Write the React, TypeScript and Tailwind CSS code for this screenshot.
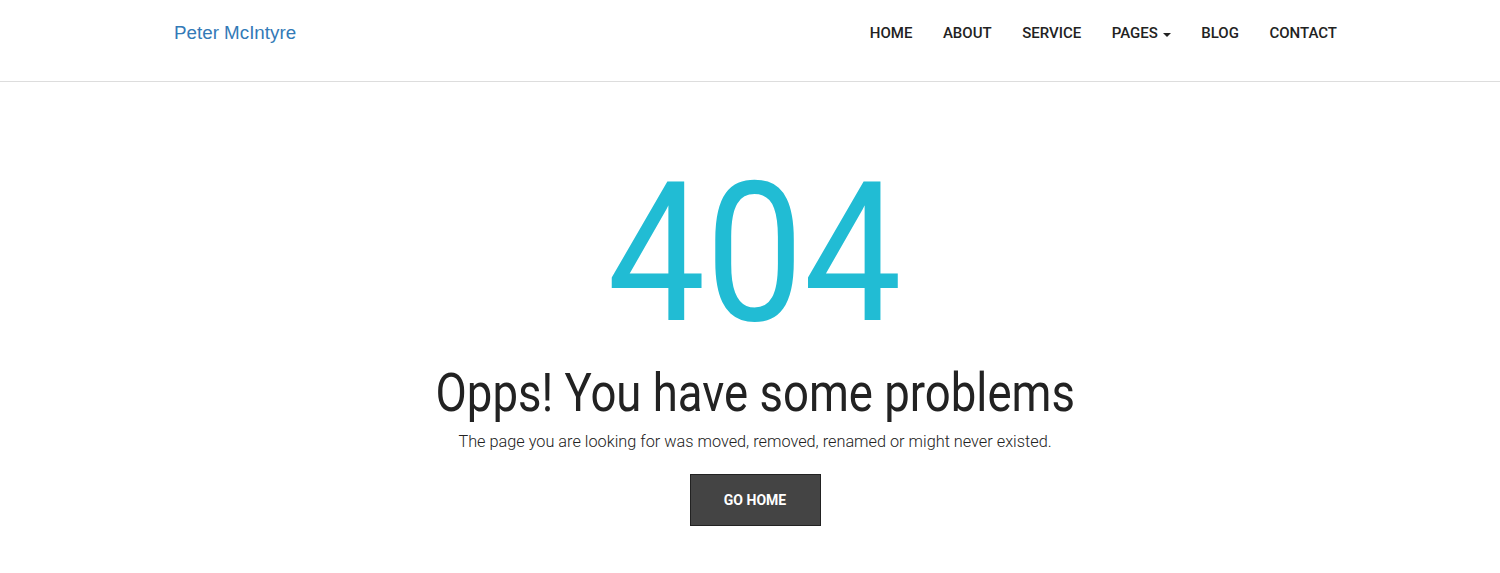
const links = ["HOME", "ABOUT", "SERVICE", "PAGES", "BLOG", "CONTACT"];

export default function App() {
  return (
    <div className="min-h-[573px] bg-white" style={{ fontFamily: "Roboto, sans-serif" }}>
      <header className="h-[82px] border-b border-[#dddddd]">
        <div className="flex h-[67px] items-center justify-between pl-[174px] pr-[163px]">
          <a className="text-[18.8px] text-[#337ab7]" style={{ fontFamily: '"Liberation Sans", Arial, sans-serif' }}>
            Peter McIntyre
          </a>
          <nav className="flex items-center gap-[30.5px] text-[15px] font-medium text-[#222]">
            {links.map((l) => (
              <span key={l} className="flex items-center">
                {l}
                {l === "PAGES" && (
                  <span className="ml-[5px] mt-[2px] border-x-[4px] border-t-[4px] border-x-transparent border-t-[#222]" />
                )}
              </span>
            ))}
          </nav>
        </div>
      </header>
      <main className="flex flex-col items-center pl-[10px]">
        <h1 className="mt-[75px] scale-x-[0.9] text-[194px] font-normal leading-none text-[#21bcd4]">404</h1>
        <h2 className="mt-[15px] scale-x-[0.843] text-[54px] font-normal leading-none text-[#222]">
          Opps! You have some problems
        </h2>
        <p className="mt-[10px] text-[16.3px] font-light text-[#222]">
          The page you are looking for was moved, removed, renamed or might never existed.
        </p>
        <button className="mt-[20px] h-[52px] w-[131px] border border-[#222] bg-[#444] text-[14px] font-bold text-white">
          GO HOME
        </button>
      </main>
    </div>
  );
}
